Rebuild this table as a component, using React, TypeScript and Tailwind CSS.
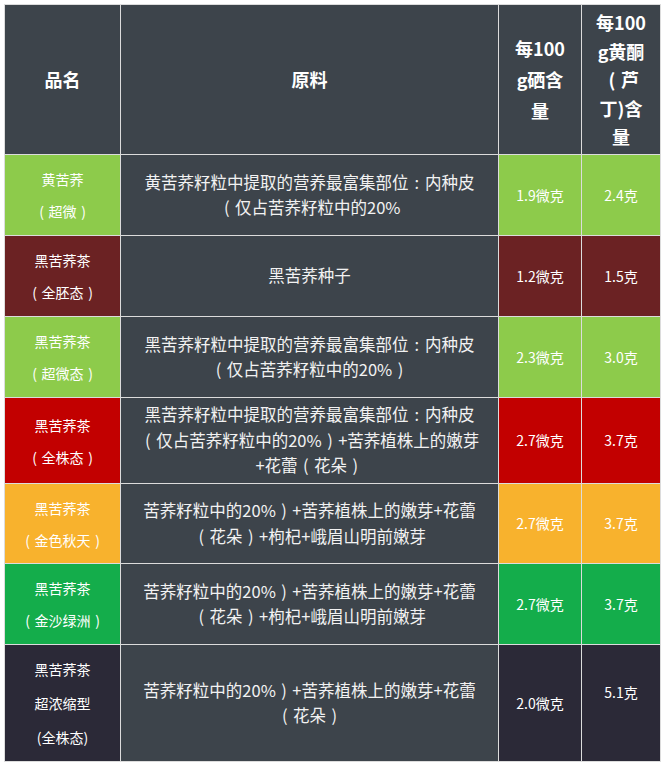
import React from "react";

type Row = {
  name: string[];
  material: string[];
  se: string;
  fl: string;
  bg: string;
  h: string;
  flClass?: string;
};

const rows: Row[] = [
  {
    name: ["黄苦荞", "（超微）"],
    material: ["黄苦荞籽粒中提取的营养最富集部位：内种皮", "（仅占苦荞籽粒中的20%"],
    se: "1.9微克",
    fl: "2.4克",
    bg: "bg-[#8dcb4b]",
    h: "h-[80px]",
  },
  {
    name: ["黑苦荞茶", "（全胚态）"],
    material: ["黑苦荞种子"],
    se: "1.2微克",
    fl: "1.5克",
    bg: "bg-[#6b2223]",
    h: "h-[80px]",
  },
  {
    name: ["黑苦荞茶", "（超微态）"],
    material: ["黑苦荞籽粒中提取的营养最富集部位：内种皮", "（仅占苦荞籽粒中的20%）"],
    se: "2.3微克",
    fl: "3.0克",
    bg: "bg-[#8dcb4b]",
    h: "h-[80px]",
  },
  {
    name: ["黑苦荞茶", "（全株态）"],
    material: [
      "黑苦荞籽粒中提取的营养最富集部位：内种皮",
      "（仅占苦荞籽粒中的20%）+苦荞植株上的嫩芽",
      "+花蕾（花朵）",
    ],
    se: "2.7微克",
    fl: "3.7克",
    bg: "bg-[#c20000]",
    h: "h-[85px]",
  },
  {
    name: ["黑苦荞茶", "（金色秋天）"],
    material: ["苦荞籽粒中的20%）+苦荞植株上的嫩芽+花蕾", "（花朵）+枸杞+峨眉山明前嫩芽"],
    se: "2.7微克",
    fl: "3.7克",
    bg: "bg-[#f8b22d]",
    h: "h-[79px]",
  },
  {
    name: ["黑苦荞茶", "（金沙绿洲）"],
    material: ["苦荞籽粒中的20%）+苦荞植株上的嫩芽+花蕾", "（花朵）+枸杞+峨眉山明前嫩芽"],
    se: "2.7微克",
    fl: "3.7克",
    bg: "bg-[#14ad4b]",
    h: "h-[80px]",
  },
  {
    name: ["黑苦荞茶", "超浓缩型", "(全株态)"],
    material: ["苦荞籽粒中的20%）+苦荞植株上的嫩芽+花蕾", "（花朵）"],
    se: "2.0微克",
    fl: "5.1克",
    bg: "bg-[#2b2937]",
    h: "h-[116px]",
    flClass: "pb-[22px]",
  },
];

const font = "font-['Noto_Sans_CJK_SC','Noto_Sans',sans-serif]";

// full-width punctuation drawn centred in a 1em box, like the original font does
const halfOf: Record<string, string> = { "（": "(", "）": ")", "：": ":" };

function fw(text: string) {
  return text.split(/([（）：])/).map((part, i) =>
    halfOf[part] ? (
      <span key={i} className="inline-block w-[1em] text-center">
        {halfOf[part]}
      </span>
    ) : (
      <React.Fragment key={i}>{part}</React.Fragment>
    )
  );
}

export default function App() {
  return (
    <div className={`bg-white min-h-screen pt-[4px] pl-[4px] ${font}`}>
      <div className="grid w-[657px] grid-cols-[115px_377px_82px_78px] gap-px bg-[#dcdcdc] p-px">
        {/* header */}
        <div className="h-[149px] bg-[#3d444b] flex items-center justify-center text-white font-bold text-[18px]">
          品名
        </div>
        <div className="h-[149px] bg-[#3d444b] flex items-center justify-center text-white font-bold text-[18px]">
          原料
        </div>
        <div className="h-[149px] bg-[#3d444b] flex items-center justify-center text-white font-bold text-[18px] leading-[31px] text-center">
          <div>
            每100
            <br />
            g硒含
            <br />量
          </div>
        </div>
        <div className="h-[149px] bg-[#3d444b] flex items-center justify-center text-white font-bold text-[18px] leading-[28.5px] text-center">
          <div>
            每100
            <br />
            g黄酮
            <br />
            {fw("（芦")}
            <br />
            丁)含
            <br />量
          </div>
        </div>

        {rows.map((r, i) => (
          <React.Fragment key={i}>
            <div
              className={`${r.h} ${r.bg} flex flex-col items-center justify-center text-white text-[14px] ${
                r.name.length > 2 ? "leading-[34px]" : "leading-[32px]"
              } text-center whitespace-nowrap`}
            >
              {r.name.map((n, j) => (
                <div key={j}>{fw(n)}</div>
              ))}
            </div>
            <div
              className={`${r.h} bg-[#3d444b] flex flex-col items-center justify-center text-[#f2f2f2] text-[16.5px] leading-[25.5px] text-center whitespace-nowrap`}
            >
              {r.material.map((m, j) => (
                <div key={j}>{fw(m)}</div>
              ))}
            </div>
            <div className={`${r.h} ${r.bg} flex items-center justify-center text-white text-[14px]`}>
              {r.se}
            </div>
            <div
              className={`${r.h} ${r.bg} flex items-center justify-center text-white text-[14px] ${r.flClass ?? ""}`}
            >
              {r.fl}
            </div>
          </React.Fragment>
        ))}
      </div>
    </div>
  );
}
